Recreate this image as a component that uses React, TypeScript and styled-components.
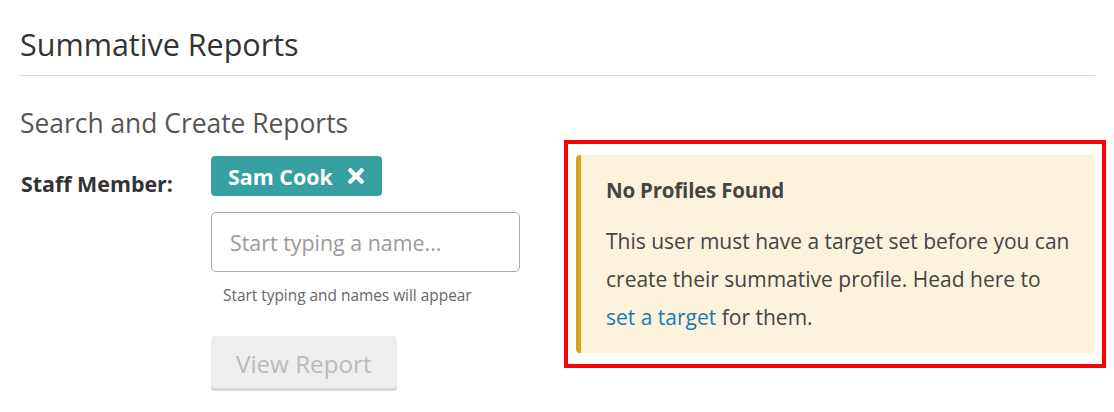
import React from "react";
import styled, { createGlobalStyle } from "styled-components";

const Global = createGlobalStyle`
  html, body { margin: 0; padding: 0; background: #fff; }
  body { font-family: "Open Sans", "Noto Sans", sans-serif; color: #333; }
  * { box-sizing: border-box; }
`;

const Page = styled.div`
  padding: 0 19px;
  width: 1114px;
`;

const Title = styled.h1`
  margin: 0;
  padding-top: 24px;
  padding-left: 1px;
  font-size: 30.5px;
  line-height: 40px;
  font-weight: 400;
  color: #333;
`;

const Rule = styled.hr`
  margin: 11px 0 0;
  border: 0;
  border-top: 1px solid #dcdcdc;
  width: 1076px;
`;

const Columns = styled.div`
  display: flex;
  align-items: flex-start;
`;

const FormCol = styled.div`
  width: 545px;
  flex-shrink: 0;
  padding-top: 30px;
`;

const SectionTitle = styled.h2`
  margin: 0 0 16px;
  padding-left: 1px;
  font-size: 26.4px;
  line-height: 34px;
  font-weight: 400;
  color: #555;
`;

const FieldRow = styled.div`
  display: grid;
  grid-template-columns: 192px 309px;
`;

const Label = styled.div`
  padding: 14px 0 0 2px;
  font-size: 21.4px;
  line-height: 28px;
  font-weight: 700;
  color: #333;
  white-space: nowrap;
`;

const Field = styled.div`
  display: flex;
  flex-direction: column;
  align-items: flex-start;
`;

const Tag = styled.span`
  display: inline-flex;
  align-items: center;
  gap: 15px;
  height: 40px;
  padding: 0 18px 0 17px;
  background: #37a0a3;
  border-radius: 4px;
  color: #fff;
  font-size: 21.4px;
  font-weight: 700;
`;

const Input = styled.input`
  margin-top: 16px;
  width: 309px;
  height: 60px;
  padding: 0 18px;
  border: 1px solid #aaa;
  border-radius: 5px;
  font-family: inherit;
  font-size: 21.4px;
  color: #333;
  outline: none;
  &::placeholder { color: #9a9a9a; }
`;

const Help = styled.div`
  margin-top: 14px;
  padding-left: 12px;
  font-size: 15.4px;
  line-height: 20px;
  color: #666;
`;

const Button = styled.button`
  margin-top: 30px;
  height: 55px;
  padding: 0 25px;
  border: 0;
  border-radius: 4px;
  background: #eee;
  box-shadow: inset 0 -3px 0 #dadada;
  color: #bbb;
  font-family: inherit;
  font-size: 24.2px;
  cursor: not-allowed;
`;

const Highlight = styled.div`
  flex-shrink: 0;
  margin-top: 64px;
  width: 542px;
  border: 4px solid #ff0000;
  padding: 11px 7px 11px 8px;
`;

const Alert = styled.div`
  background: #fcf3dc;
  border-left: 5px solid #d8a61b;
  border-radius: 4px;
  padding: 21px 21px 17px 25px;
  color: #444;
`;

const AlertTitle = styled.div`
  font-size: 20.5px;
  line-height: 28px;
  font-weight: 700;
  color: #444;
  margin-bottom: 18px;
  letter-spacing: -0.2px;
`;

const AlertBody = styled.p`
  margin: 0;
  font-size: 21px;
  line-height: 38px;
`;

const Link = styled.a`
  color: #1a7ab8;
  text-decoration: none;
`;

const TimesIcon = () => (
  <svg width="16" height="16" viewBox="0 80 352 352" fill="currentColor" aria-hidden="true">
    <path d="M242.72 256l100.07-100.07c12.28-12.28 12.28-32.19 0-44.48l-22.24-22.24c-12.28-12.28-32.19-12.28-44.48 0L176 189.28 75.93 89.21c-12.28-12.28-32.19-12.28-44.48 0L9.21 111.45c-12.28 12.28-12.28 32.19 0 44.48L109.28 256 9.21 356.07c-12.28 12.28-12.28 32.19 0 44.480l22.24 22.24c12.28 12.28 32.2 12.28 44.48 0L176 322.72l100.07 100.07c12.28 12.28 32.2 12.28 44.48 0l22.24-22.24c12.28-12.28 12.28-32.19 0-44.48L242.72 256z" />
  </svg>
);

export default function App() {
  return (
    <>
      <Global />
      <Page>
        <Title>Summative Reports</Title>
        <Rule />
        <Columns>
          <FormCol>
            <SectionTitle>Search and Create Reports</SectionTitle>
            <FieldRow>
              <Label>Staff Member:</Label>
              <Field>
                <Tag>
                  Sam Cook
                  <TimesIcon />
                </Tag>
                <Input placeholder="Start typing a name..." />
                <Help>Start typing and names will appear</Help>
                <Button disabled>View Report</Button>
              </Field>
            </FieldRow>
          </FormCol>
          <Highlight>
            <Alert>
              <AlertTitle>No Profiles Found</AlertTitle>
              <AlertBody>
                This user must have a target set before you can create their
                summative profile. Head here to <Link href="#">set a target</Link> for
                them.
              </AlertBody>
            </Alert>
          </Highlight>
        </Columns>
      </Page>
    </>
  );
}
